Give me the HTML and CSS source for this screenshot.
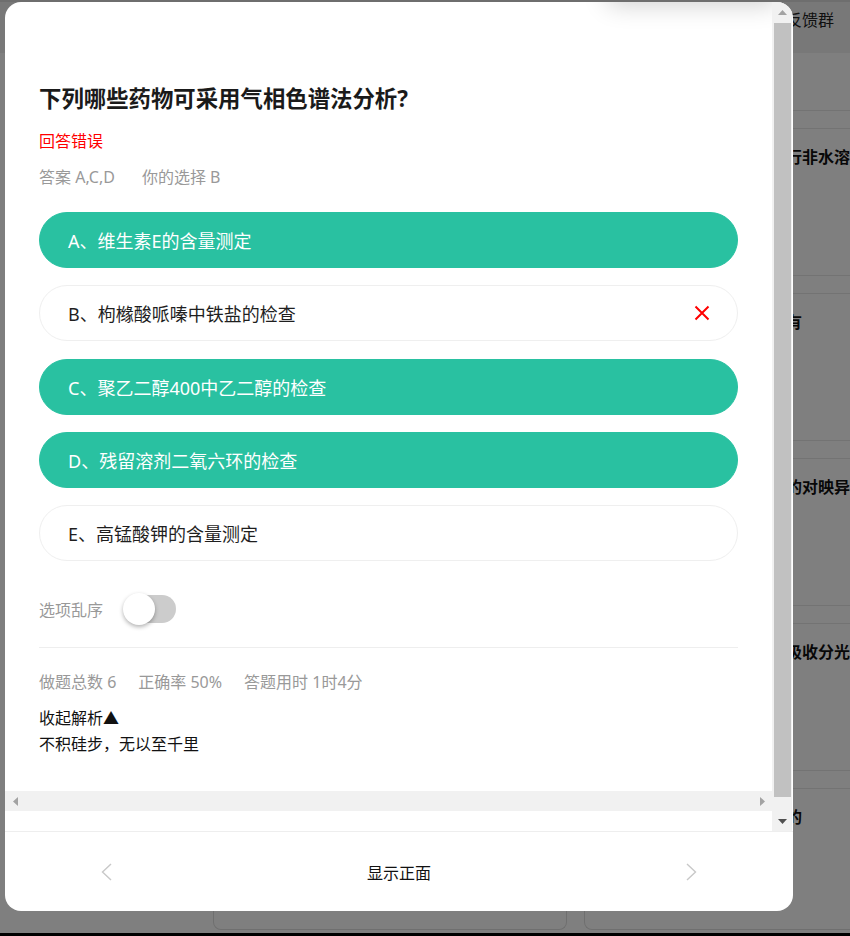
FILE: index.html
```html
<!DOCTYPE html>
<html lang="zh-CN">
<head>
    <meta charset="UTF-8">
    <meta name="viewport" content="width=device-width, initial-scale=1.0">
    <title>刷题 - 答题卡</title>
    <link rel="stylesheet" href="styles.css">
</head>
<body>

    <!-- 背景页面 -->
    <div class="topbar"><span class="topbar-link">反馈群</span></div>

    <div class="page">
        <div class="page-main"></div>
        <div class="card-list">
            <div class="card card-first"></div>
            <div class="card"><p class="card-title">行非水溶</p></div>
            <div class="card"><p class="card-title">有</p></div>
            <div class="card"><p class="card-title">的对映异</p></div>
            <div class="card"><p class="card-title">吸收分光</p></div>
            <div class="card"><p class="card-title">的</p></div>
        </div>
    </div>

    <div class="dock">
        <div class="dock-btn"></div>
        <div class="dock-btn dock-btn-wide"></div>
    </div>
    <div class="page-end"></div>

    <!-- 遮罩和弹窗 -->
    <div class="mask"></div>

    <div class="sheet">
        <div class="sheet-glow"></div>

        <div class="sheet-body">
            <div class="sheet-main">
                <div class="question">
                    <h2 class="question-title">下列哪些药物可采用气相色谱法分析?</h2>
                    <p class="result">回答错误</p>
                    <div class="answer">
                        <span>答案 A,C,D</span><span>你的选择 B</span>
                    </div>

                    <div class="options">
                        <div class="option correct">A、维生素E的含量测定</div>
                        <div class="option">
                            <span>B、枸橼酸哌嗪中铁盐的检查</span>
                            <svg class="option-mark" viewBox="0 0 16 16">
                                <path d="M1.5 1.5 L14.5 14.5 M14.5 1.5 L1.5 14.5" stroke="#ff0000" stroke-width="2" fill="none"/>
                            </svg>
                        </div>
                        <div class="option correct">C、聚乙二醇400中乙二醇的检查</div>
                        <div class="option correct">D、残留溶剂二氧六环的检查</div>
                        <div class="option">E、高锰酸钾的含量测定</div>
                    </div>

                    <div class="shuffle">
                        <span>选项乱序</span>
                        <div class="switch"><div class="switch-knob"></div></div>
                    </div>

                    <div class="divider"></div>

                    <div class="stats">
                        <span>做题总数 6</span><span>正确率 50%</span><span>答题用时 1时4分</span>
                    </div>

                    <div class="analysis">
                        <div>收起解析▲</div>
                        <div>不积硅步，无以至千里</div>
                    </div>
                </div>

                <!-- 横向滚动条 -->
                <div class="hbar">
                    <span class="bar-btn">
                        <svg width="5" height="9" viewBox="0 0 5 9"><path d="M5 0 L0 4.5 L5 9Z" fill="#a3a3a3"/></svg>
                    </span>
                    <span class="bar-btn">
                        <svg width="5" height="9" viewBox="0 0 5 9"><path d="M0 0 L5 4.5 L0 9Z" fill="#a3a3a3"/></svg>
                    </span>
                </div>
            </div>

            <!-- 纵向滚动条 -->
            <div class="vbar">
                <span class="bar-btn">
                    <svg width="9" height="5" viewBox="0 0 9 5"><path d="M0 5 L4.5 0 L9 5Z" fill="#a3a3a3"/></svg>
                </span>
                <div class="vbar-track"><div class="vbar-thumb"></div></div>
                <span class="bar-btn">
                    <svg width="9" height="5" viewBox="0 0 9 5"><path d="M0 0 L4.5 5 L9 0Z" fill="#505050"/></svg>
                </span>
            </div>
        </div>

        <div class="sheet-foot">
            <svg class="chevron" width="11" height="18" viewBox="0 0 11 18">
                <polyline points="10,1 1.5,9 10,17" stroke="#c8c8c8" stroke-width="1.4" fill="none"/>
            </svg>
            <span>显示正面</span>
            <svg class="chevron" width="11" height="18" viewBox="0 0 11 18">
                <polyline points="1,1 9.5,9 1,17" stroke="#c8c8c8" stroke-width="1.4" fill="none"/>
            </svg>
        </div>
    </div>

</body>
</html>
```

FILE: styles.css
```css
* {
    box-sizing: border-box;
}
body {
    margin: 0;
    height: 100vh;
    display: flex;
    flex-direction: column;
    overflow: hidden;
    font-family: "Noto Sans", "Noto Sans CJK SC", sans-serif;
    background-color: #fff;
    color: #222;
}

/* 背景页面 */
.topbar {
    height: 53px;
    flex: none;
    border-top: 2px solid #dcdcdc;
    background-color: #f1f1f1;
    display: flex;
    justify-content: flex-end;
    padding: 6px 16px 0 0;
}
.topbar-link {
    font-size: 16px;
    line-height: 24px;
    color: #222;
}
.page {
    flex: 1;
    min-height: 0;
    overflow: hidden;
    display: grid;
    grid-template-columns: 786px 1fr;
}
.card-list {
    background-color: #fff;
}
.card {
    height: 148px;
    border-top: 1px solid #e6e6e6;
    border-bottom: 1px solid #e6e6e6;
    margin-bottom: 17px;
    padding: 16px 0 0 0;
}
.card-first {
    height: 58px;
    border-top: none;
    padding: 0;
}
.card-title {
    margin: 0;
    font-size: 16px;
    font-weight: bold;
    line-height: 24px;
    color: #111;
    white-space: nowrap;
}
.dock {
    height: 22px;
    flex: none;
    display: flex;
    gap: 17px;
    padding-left: 213px;
}
.dock-btn {
    flex: none;
    width: 354px;
    height: 19px;
    border: 1px solid #dedede;
    border-top: none;
    border-radius: 0 0 8px 8px;
}
.dock-btn-wide {
    width: 266px;
    border-right: none;
    border-radius: 0 0 0 8px;
}
.page-end {
    height: 3px;
    flex: none;
    background-color: #000;
}

/* 遮罩 */
.mask {
    position: fixed;
    top: 0;
    left: 0;
    right: 0;
    bottom: 0;
    background-color: rgba(0, 0, 0, 0.5);
}

/* 弹窗 */
.sheet {
    position: fixed;
    top: 2px;
    left: 5px;
    width: 788px;
    height: 909px;
    background-color: #fff;
    border-radius: 16px;
    overflow: hidden;
    display: flex;
    flex-direction: column;
}
.sheet-glow {
    position: absolute;
    top: -40px;
    left: 605px;
    width: 165px;
    height: 40px;
    box-shadow: 0 0 26px 2px rgba(0, 0, 0, 0.2);
}
.sheet-body {
    position: relative;
    z-index: 1;
    height: 829px;
    flex: none;
    display: flex;
    padding-right: 1px;
    overflow: hidden;
}
.sheet-main {
    flex: 1;
    min-width: 0;
    display: flex;
    flex-direction: column;
}

/* 滚动条 */
.hbar {
    height: 20px;
    flex: none;
    background-color: #f1f1f1;
    display: flex;
    justify-content: space-between;
}
.vbar {
    width: 20px;
    flex: none;
    background-color: #f1f1f1;
    display: flex;
    flex-direction: column;
}
.bar-btn {
    width: 20px;
    height: 20px;
    flex: none;
    display: flex;
    align-items: center;
    justify-content: center;
}
.vbar-track {
    flex: 1;
    padding: 1px 1px 0 2px;
}
.vbar-thumb {
    height: 774px;
    background-color: #c1c1c1;
}

/* 题目 */
.question {
    height: 789px;
    flex: none;
    overflow: hidden;
    padding: 81px 34px 0;
}
.question-title {
    margin: 0;
    font-size: 22.4px;
    font-weight: bold;
    line-height: 32px;
    color: #1a1a1a;
}
.result {
    margin: 14px 0 0;
    font-size: 16px;
    line-height: 24px;
    color: #ff0000;
}
.answer {
    margin-top: 12px;
    font-size: 16px;
    line-height: 24px;
    color: #999;
}
.answer span + span {
    margin-left: 27px;
}
.options {
    margin-top: 23px;
    display: flex;
    flex-direction: column;
    gap: 17.25px;
}
.option {
    height: 56px;
    border: 1px solid #efefef;
    border-radius: 28px;
    display: flex;
    align-items: center;
    justify-content: space-between;
    padding: 0 27px 0 28px;
    font-size: 18px;
    color: #1f1f1f;
}
.option.correct {
    background-color: #29c1a1;
    border-color: #29c1a1;
    color: #fff;
}
.option-mark {
    width: 16px;
    height: 16px;
}
.shuffle {
    margin-top: 32px;
    height: 32px;
    display: flex;
    align-items: center;
    gap: 21px;
    font-size: 16px;
    color: #999;
}
.switch {
    position: relative;
    width: 52px;
    height: 28px;
    border-radius: 14px;
    background-color: #ccc;
}
.switch-knob {
    position: absolute;
    left: -1px;
    top: -2px;
    width: 32px;
    height: 32px;
    border-radius: 50%;
    background-color: #fff;
    box-shadow: 0 2px 4px rgba(0, 0, 0, 0.3);
}
.divider {
    margin-top: 22px;
    border-top: 1px solid #eee;
}
.stats {
    margin-top: 22px;
    font-size: 16px;
    line-height: 24px;
    color: #999;
}
.stats span {
    margin-right: 22px;
}
.analysis {
    margin-top: 11px;
    font-size: 16px;
    line-height: 26px;
    color: #111;
}

/* 底部翻页 */
.sheet-foot {
    flex: 1;
    border-top: 1px solid #eee;
    display: flex;
    align-items: center;
    justify-content: space-between;
    padding: 0 96px;
    font-size: 16px;
    color: #111;
}
```
